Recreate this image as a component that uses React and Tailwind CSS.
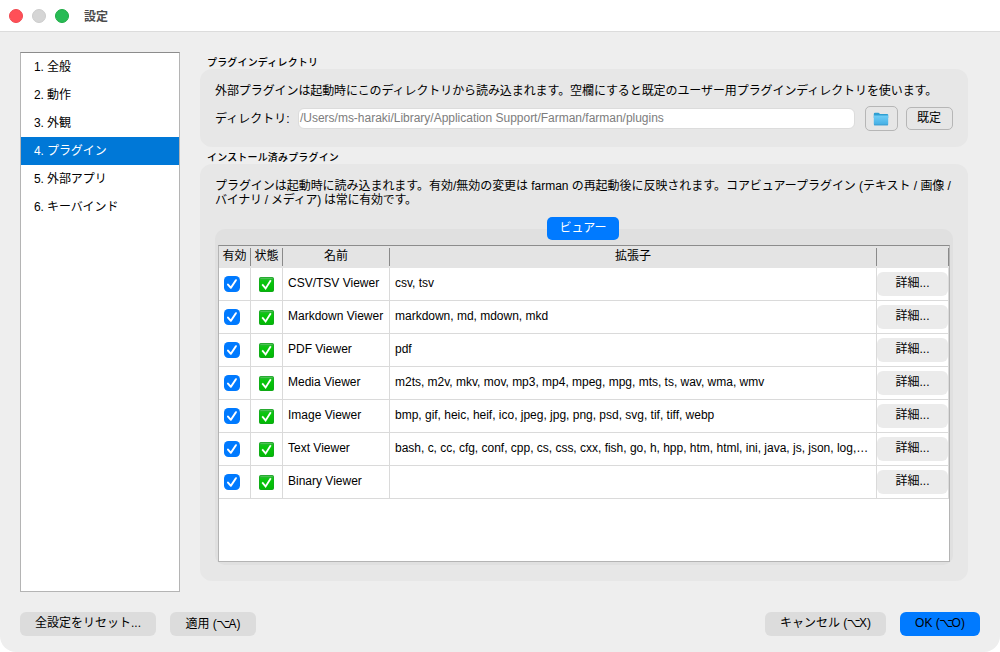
import React from "react";

const categories = [
  "1. 全般",
  "2. 動作",
  "3. 外観",
  "4. プラグイン",
  "5. 外部アプリ",
  "6. キーバインド",
];

const plugins = [
  { name: "CSV/TSV Viewer", ext: "csv, tsv" },
  { name: "Markdown Viewer", ext: "markdown, md, mdown, mkd" },
  { name: "PDF Viewer", ext: "pdf" },
  { name: "Media Viewer", ext: "m2ts, m2v, mkv, mov, mp3, mp4, mpeg, mpg, mts, ts, wav, wma, wmv" },
  { name: "Image Viewer", ext: "bmp, gif, heic, heif, ico, jpeg, jpg, png, psd, svg, tif, tiff, webp" },
  { name: "Text Viewer", ext: "bash, c, cc, cfg, conf, cpp, cs, css, cxx, fish, go, h, hpp, htm, html, ini, java, js, json, log,…" },
  { name: "Binary Viewer", ext: "" },
];

function Checkbox() {
  return (
    <svg width="16" height="16" viewBox="0 0 16 16" className="block">
      <rect width="16" height="16" rx="4.5" fill="#007aff" />
      <path d="M4 8.6 L6.9 11.8 L11.9 4.2" fill="none" stroke="#fff" strokeWidth="2" strokeLinecap="round" strokeLinejoin="round" />
    </svg>
  );
}

function StatusMark() {
  return (
    <svg width="15" height="15" viewBox="0 0 15 15" className="block">
      <defs>
        <linearGradient id="mark" x1="0" y1="0" x2="0" y2="1">
          <stop offset="0" stopColor="#2fb53a" />
          <stop offset="0.3" stopColor="#08c60c" />
          <stop offset="1" stopColor="#02b806" />
        </linearGradient>
      </defs>
      <rect width="15" height="15" rx="2" fill="#1a9c24" />
      <rect x="0.5" y="0.5" width="14" height="14" rx="1.6" fill="url(#mark)" />
      <path d="M1.5 1.4 H13.5" stroke="#5cc463" strokeWidth="0.8" />
      <path d="M3.2 7.4 L6.6 11.4 L11.8 3.2" fill="none" stroke="#fff" strokeWidth="1.8" strokeLinejoin="miter" />
    </svg>
  );
}

function FolderIcon() {
  return (
    <svg width="16" height="14" viewBox="0 0 16 14" className="block">
      <defs>
        <linearGradient id="folder" x1="0" y1="0" x2="0" y2="1">
          <stop offset="0" stopColor="#70cdf6" />
          <stop offset="1" stopColor="#43aee4" />
        </linearGradient>
      </defs>
      <path d="M0.8 2 Q0.8 0.8 2 0.8 H5.4 Q6 0.8 6.5 1.4 L7 2 H14.2 Q15.2 2 15.2 3 V6 H0.8 Z" fill="#2f9fd2" />
      <path d="M0.8 3.6 H15.2 V12.2 Q15.2 13.2 14.2 13.2 H1.8 Q0.8 13.2 0.8 12.2 Z" fill="url(#folder)" />
      <path d="M1 12.9 H15" stroke="#3a98c8" strokeWidth="0.7" />
    </svg>
  );
}

function Option() {
  return <span className="-mr-[1.5px] -ml-[0.5px] font-['DejaVu_Sans'] text-[12px]">⌥</span>;
}

function HeaderCell({ children }) {
  return (
    <div className="flex h-[22px] items-center py-[2px]">
      <span className="flex-1 pb-[2px] text-center leading-[16px]">{children}</span>
      <span className="h-[18px] w-px bg-[#8a8a8a]" />
    </div>
  );
}

const cell = "h-[33px] border-r border-b border-[#dadada]";
const columns = "grid grid-cols-[32px_32px_107px_487px_72px]";

export default function App() {
  return (
    <div className="h-[652px] w-[1000px] overflow-hidden bg-white font-['Liberation_Sans','Noto_Sans_CJK_JP',sans-serif] text-[12px] leading-[14px] text-black">
      <div className="flex h-full flex-col overflow-hidden rounded-b-[16px] bg-[#eeeeee]">
        <header className="flex h-[32px] shrink-0 items-center border-b border-[#dcdcdc] bg-white pl-[9px]">
          <div className="flex gap-[9px]">
            <span className="size-[14px] rounded-full border border-[#f0484f] bg-[#ff4f57]" />
            <span className="size-[14px] rounded-full border border-[#cccccc] bg-[#d5d5d5]" />
            <span className="size-[14px] rounded-full border border-[#1dab44] bg-[#28bb55]" />
          </div>
          <h1 className="mt-[2px] ml-[15px] font-bold text-[#4c4c4c]">設定</h1>
        </header>

        <div className="flex pt-[20px] pl-[20px]">
          <nav className="h-[540px] w-[160px] border border-[#b4b4b4] border-t-[#8c8c8c] bg-white tracking-[-0.1px]">
            {categories.map((label, i) => (
              <div
                key={label}
                className={
                  i === 3
                    ? "flex h-[28px] items-center bg-[#0078d7] pl-[13px] text-white"
                    : "flex h-[28px] items-center pl-[13px]"
                }
              >
                {label}
              </div>
            ))}
          </nav>

          <main className="ml-[20px] w-[768px]">
            <h2 className="mt-[3px] ml-[7px] h-[14px] pt-px text-[10px] font-medium tracking-[0.17px]">プラグインディレクトリ</h2>
            <section className="h-[78px] rounded-[12px] bg-[#e7e7e7] px-[15px] pt-[15px]">
              <p className="tracking-[-0.088px] whitespace-nowrap">
                外部プラグインは起動時にこのディレクトリから読み込まれます。空欄にすると既定のユーザー用プラグインディレクトリを使います。
              </p>
              <div className="mt-[8px] flex h-[25px] items-center">
                <span className="w-[83px] whitespace-nowrap">ディレクトリ:</span>
                <div className="flex h-[21px] w-[557px] items-center rounded-[6px] border border-[#dcdcdc] bg-white pb-px pl-px tracking-[-0.015px] text-[#7d7d7d]">
                  /Users/ms-haraki/Library/Application Support/Farman/farman/plugins
                </div>
                <button className="ml-[10px] flex h-[25px] w-[33px] items-center justify-center rounded-[5px] border border-[#b6b6b6] bg-[#e6e6e6] pr-px">
                  <FolderIcon />
                </button>
                <button className="ml-[8px] h-[23px] w-[47px] rounded-[5px] border border-[#b6b6b6] bg-[#e6e6e6] pr-px pb-[2px]">
                  既定
                </button>
              </div>
            </section>

            <h2 className="mt-[3px] ml-[7px] h-[14px] pt-px text-[10px] font-medium tracking-[0.17px]">インストール済みプラグイン</h2>
            <section className="h-[417px] rounded-[12px] bg-[#e7e7e7] px-[15px] pt-[15px]">
              <p className="tracking-[-0.042px] whitespace-nowrap">
                プラグインは起動時に読み込まれます。有効/無効の変更は farman の再起動後に反映されます。コアビュアープラグイン (テキスト / 画像 /
                <br />
                <span className="tracking-[-0.25px]">バイナリ / メディア) は常に有効です。</span>
              </p>
              <div className="mt-[22px] h-[336px] rounded-[10px] bg-[#e0e0e0] px-[3px]">
                <div className="flex h-[16px] justify-center">
                  <button className="relative -top-[12px] left-[-1px] h-[23px] w-[72px] rounded-[5px] bg-[#007aff] pb-[2px] leading-[20px] text-white">
                    ビュアー
                  </button>
                </div>
                <div className="h-[317px] w-[732px] border border-[#b4b4b4] border-t-[#8c8c8c] bg-white">
                  <div className={columns + " bg-[#e4e4e4]"}>
                    <HeaderCell>有効</HeaderCell>
                    <HeaderCell>状態</HeaderCell>
                    <HeaderCell>名前</HeaderCell>
                    <HeaderCell>拡張子</HeaderCell>
                    <HeaderCell />
                  </div>
                  {plugins.map((p) => (
                    <div key={p.name} className={columns}>
                      <div className={cell + " pt-[8px] pl-[5px]"}>
                        <Checkbox />
                      </div>
                      <div className={cell + " pt-[9px] pl-[8px]"}>
                        <StatusMark />
                      </div>
                      <div className={cell + " pt-[8px] pl-[5px] whitespace-nowrap"}>{p.name}</div>
                      <div className={cell + " pt-[8px] pl-[5px] tracking-[-0.01px] whitespace-nowrap"}>{p.ext}</div>
                      <div className={cell + " pt-[4px]"}>
                        <button className="h-[24px] w-[71px] rounded-[6px] bg-[#ebebeb] pb-[3px]">詳細...</button>
                      </div>
                    </div>
                  ))}
                </div>
              </div>
            </section>
          </main>
        </div>

        <footer className="mt-[20px] flex h-[24px] pr-[20px] pl-[20px]">
          <button className="w-[136px] rounded-[6px] bg-[#dcdcdc] pb-[3px]">全設定をリセット...</button>
          <button className="ml-[14px] w-[86px] rounded-[6px] bg-[#dcdcdc] pb-px">
            適用 (<Option />A)
          </button>
          <button className="ml-auto w-[121px] rounded-[6px] bg-[#dcdcdc] pb-[3px]">
            キャンセル (<Option />X)
          </button>
          <button className="ml-[14px] w-[80px] rounded-[6px] bg-[#007aff] pb-[3px]">
            OK (<Option />O)
          </button>
        </footer>
      </div>
    </div>
  );
}
